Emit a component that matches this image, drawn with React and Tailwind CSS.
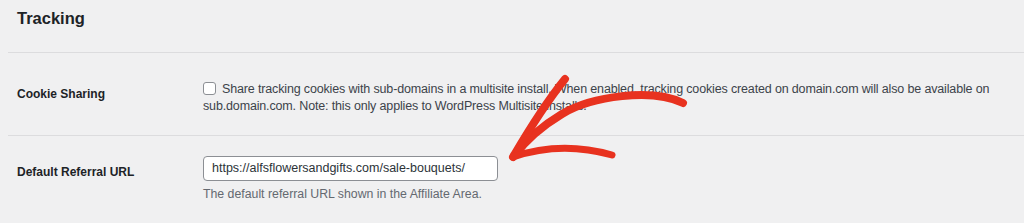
export default function App() {
  return (
    <div
      className="relative min-h-[223px] w-full overflow-hidden bg-[#f0f0f1] pl-2 text-[13px] text-[#3c434a]"
      style={{ fontFamily: '"Liberation Sans", Arial, sans-serif' }}
    >
      {/* Section title */}
      <div className="pl-[9px] pt-[7px] pb-[23px]">
        <h2 className="text-[16.5px] leading-[22px] font-semibold text-[#1d2327]">
          Tracking
        </h2>
      </div>

      <div className="border-t border-[#dcdcde]">
        {/* Cookie sharing */}
        <div className="flex items-start pl-[9px] pt-[27px] pb-[20px]">
          <div className="w-[186px] shrink-0 pt-[6px] text-[12px] leading-[17px] font-semibold text-[#1d2327]">
            Cookie Sharing
          </div>
          <div className="pr-4 text-[12.5px] leading-[17px] tracking-[-0.15px]">
            <label className="inline">
              <span className="mr-[6px] inline-block h-[13px] w-[13px] translate-y-[2px] rounded-[3px] border border-[#8c8f94] bg-white align-baseline"></span>
              Share tracking cookies with sub-domains in a multisite install. When enabled, tracking cookies created on domain.com will also be available on sub.domain.com. Note: this only applies to WordPress Multisite installs.
            </label>
          </div>
        </div>

        {/* Default referral URL */}
        <div className="flex items-start border-t border-[#dcdcde] pl-[9px] pt-[20px] pb-[20px]">
          <div className="w-[186px] shrink-0 pt-[8px] text-[12px] leading-[17px] font-semibold text-[#1d2327]">
            Default Referral URL
          </div>
          <div>
            <div className="flex h-[25px] w-[295px] items-center rounded-[4px] border border-[#8c8f94] bg-white px-[8px] text-[12.5px] text-[#2c3338]">
              https://alfsflowersandgifts.com/sale-bouquets/
            </div>
            <p className="mt-[5px] text-[12.3px] leading-[17px] text-[#646970]">
              The default referral URL shown in the Affiliate Area.
            </p>
          </div>
        </div>
      </div>
      <div className="border-t border-[#dcdcde]"></div>

      {/* hand-drawn arrow */}
      <svg
        className="pointer-events-none absolute inset-0 h-[223px] w-[1024px]"
        viewBox="0 0 1024 223"
        fill="none"
        stroke="#e8321f"
        strokeLinecap="round"
        strokeLinejoin="round"
      >
        <path d="M683 103 C 652 88, 592 96, 562 114 C 542 126, 526 140, 514 156" strokeWidth="8" />
        <path d="M565 79 C 548 100, 530 128, 513 157" strokeWidth="8" />
        <path d="M513 157 C 545 146, 580 146, 612 155" strokeWidth="7" />
      </svg>
    </div>
  );
}
